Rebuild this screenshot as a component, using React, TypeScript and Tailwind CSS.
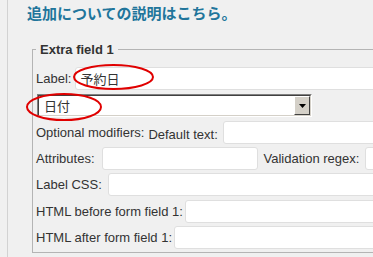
import React from "react";

const inputBase =
  "h-[23px] shrink-0 rounded-[3px] border border-[#dfdfdf] bg-white px-[4px] text-[13px] text-[#333] outline-none font-['Noto_Sans_CJK_JP',sans-serif]";

const Field = ({ className, value }: { className: string; value?: string }) => (
  <input readOnly value={value || ""} className={`${inputBase} ${className}`} />
);

const App = () => {
  return (
    <div className="relative h-[257px] w-[373px] overflow-hidden bg-[#f0f0f0] font-['Liberation_Sans',Arial,sans-serif] text-[13px] text-[#333]">
      <div className="ml-[7px] h-full border-l border-[#d2d2d2] pl-[19px] pt-[3px]">
        <h2 className="font-['Noto_Sans_CJK_JP',sans-serif] text-[15px] font-bold leading-[20px] text-[#21759b]">
          追加についての説明はこちら。
        </h2>

        <fieldset className="ml-[5px] mt-[19px] w-[440px] border border-[#b4b4b4] pb-[3px] pl-[3px] pt-[10px]">
          <legend className="px-[4px] text-[13px] font-bold leading-[15px] text-[#333]">
            Extra field 1
          </legend>

          <div className="flex h-[23px] items-center">
            <span className="shrink-0">Label:</span>
            <Field className="ml-[4px] w-[320px]" value="予約日" />
          </div>

          {/* old windows style select */}
          <div className="ml-[1px] mt-[4px] flex h-[23px] w-[275px] border border-t-[#808080] border-l-[#808080] border-r-white border-b-white">
            <div className="flex flex-1 border border-t-[#404040] border-l-[#404040] border-r-[#d4d0c8] border-b-[#d4d0c8] bg-white">
              <span className="flex-1 pl-[5px] font-['Noto_Sans_CJK_JP',sans-serif] leading-[19px]">日付</span>
              <div className="flex w-[16px] items-center justify-center border border-t-white border-l-white border-r-[#404040] border-b-[#404040] bg-[#d4d0c8]">
                <svg width="7" height="4" viewBox="0 0 7 4">
                  <path d="M0 0H7L3.5 4Z" fill="#000" />
                </svg>
              </div>
            </div>
          </div>

          <div className="mt-[4px] flex h-[23px] items-center">
            <span className="shrink-0">Optional modifiers:</span>
            <span className="ml-[4px] mt-[4px] shrink-0">Default text:</span>
            <Field className="ml-[5px] w-[200px]" />
          </div>

          <div className="mt-[3px] flex h-[23px] items-center">
            <span className="shrink-0">Attributes:</span>
            <Field className="ml-[7px] w-[156px]" />
            <span className="ml-[6px] shrink-0">Validation regex:</span>
            <Field className="ml-[6px] w-[120px]" />
          </div>

          <div className="mt-[3px] flex h-[23px] items-center">
            <span className="shrink-0">Label CSS:</span>
            <Field className="ml-[6px] w-[300px]" />
          </div>

          <div className="mt-[4px] flex h-[23px] items-center">
            <span className="shrink-0">HTML before form field 1:</span>
            <Field className="ml-[2px] w-[240px]" />
          </div>

          <div className="mt-[3px] flex h-[23px] items-center">
            <span className="shrink-0">HTML after form field 1:</span>
            <Field className="ml-[2px] w-[240px]" />
          </div>
        </fieldset>
      </div>

      {/* red annotation rings */}
      <svg className="pointer-events-none absolute inset-0" width="373" height="257">
        <ellipse cx="113.5" cy="77" rx="39.5" ry="12" fill="none" stroke="#e00000" strokeWidth="2" />
        <ellipse cx="64" cy="107" rx="37" ry="13" fill="none" stroke="#e00000" strokeWidth="2" />
      </svg>
    </div>
  );
};

export default App;
